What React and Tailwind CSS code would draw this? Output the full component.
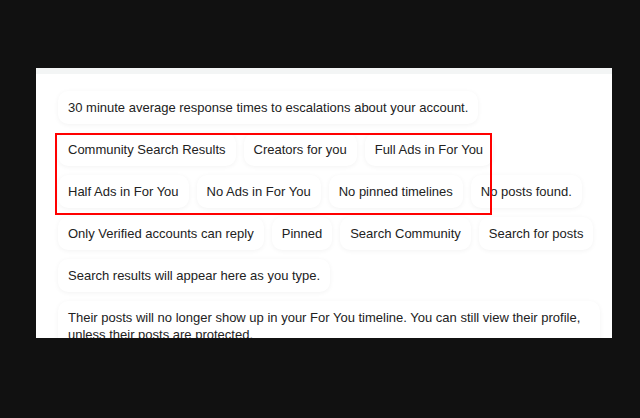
const chips = [
  '30 minute average response times to escalations about your account.',
  'Community Search Results',
  'Creators for you',
  'Full Ads in For You',
  'Half Ads in For You',
  'No Ads in For You',
  'No pinned timelines',
  'No posts found.',
  'Only Verified accounts can reply',
  'Pinned',
  'Search Community',
  'Search for posts',
  'Search results will appear here as you type.',
  'Their posts will no longer show up in your For You timeline. You can still view their profile, unless their posts are protected.',
]

export default function App() {
  return (
    <div
      className="w-[640px] h-[418px] bg-[#111111] pt-[68px] pl-[36px]"
      style={{ fontFamily: '"Liberation Sans", Arial, sans-serif' }}
    >
      <div className="relative w-[576px] h-[270px] bg-white overflow-hidden">
        <div className="h-[6px] bg-[#f3f5f5]" />
        <div className="w-[542px] ml-[22px] mt-[17px] flex flex-wrap gap-x-[8px] gap-y-[9px]">
          {chips.map((c) => (
            <div
              key={c}
              className="px-[10px] py-[8px] rounded-[10px] bg-white text-[13px] leading-[17px] text-[#222] shadow-[0_1px_5px_rgba(0,0,0,0.05)]"
            >
              {c}
            </div>
          ))}
        </div>
        {/* highlight box */}
        <div className="absolute left-[19px] top-[65px] w-[437px] h-[82px] border-2 border-[#ff0000]" />
      </div>
    </div>
  )
}
